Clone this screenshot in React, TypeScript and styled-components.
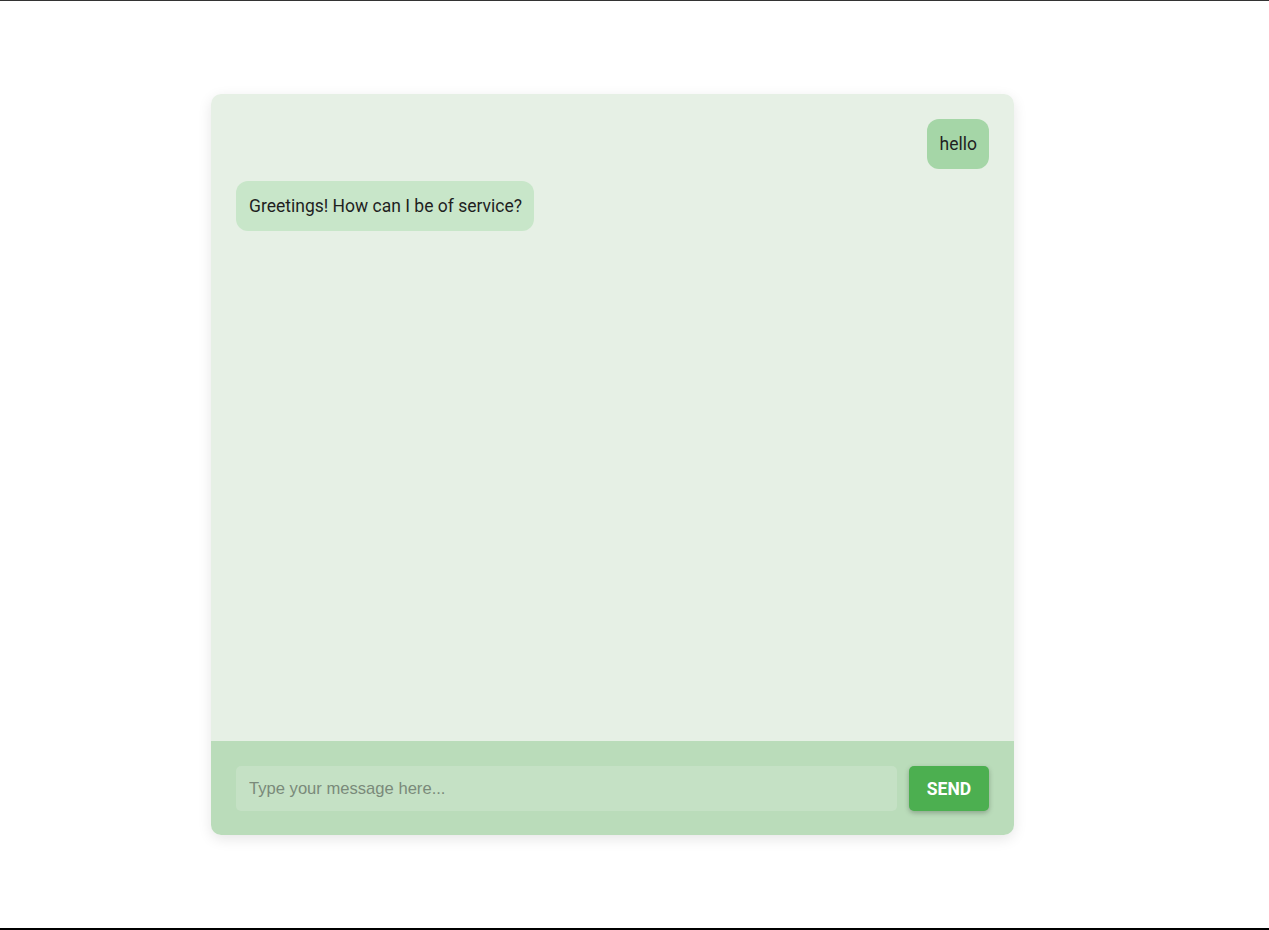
import React, { useState } from "react";
import styled, { createGlobalStyle } from "styled-components";

const Global = createGlobalStyle`
  html, body { margin: 0; padding: 0; background: #ffffff; }
  * { box-sizing: border-box; }
`;

const Page = styled.div`
  height: 930px;
  border-top: 1px solid #333333;
  border-bottom: 2px solid #000000;
  padding: 93px 0 0 211px;
  font-family: Roboto, "Liberation Sans", sans-serif;
`;

const Card = styled.div`
  width: 803px;
  height: 741px;
  border-radius: 10px;
  overflow: hidden;
  display: flex;
  flex-direction: column;
  box-shadow: 0 4px 14px rgba(0, 0, 0, 0.1);
`;

const Messages = styled.div`
  flex: 1;
  background: #e6f0e5;
  padding: 25px;
  display: flex;
  flex-direction: column;
  gap: 12px;
`;

const Bubble = styled.div<{ $user?: boolean }>`
  align-self: ${(p) => (p.$user ? "flex-end" : "flex-start")};
  background: ${(p) => (p.$user ? "#a5d6a7" : "#c8e6c9")};
  color: #1f1f1f;
  font-size: 17.5px;
  font-weight: 400;
  line-height: 25px;
  padding: 13px 12px 12px 13px;
  border-radius: 12px;
`;

const Footer = styled.div`
  height: 94px;
  background: #badcba;
  padding: 25px;
  display: flex;
  gap: 12px;
`;

const Input = styled.input`
  flex: 1;
  height: 45px;
  border: none;
  outline: none;
  border-radius: 5px;
  background: #c5e1c5;
  padding: 0 13px;
  font-family: "Liberation Sans", Arial, sans-serif;
  font-size: 16.6px;
  color: #333;
  &::placeholder { color: #7a8a7a; }
`;

const SendButton = styled.button`
  width: 80px;
  height: 45px;
  border: none;
  border-radius: 5px;
  background: #4caf50;
  color: #ffffff;
  font-family: Roboto, "Liberation Sans", sans-serif;
  font-weight: 700;
  font-size: 17.5px;
  text-transform: uppercase;
  box-shadow: 0 2px 5px rgba(0, 0, 0, 0.25);
  cursor: pointer;
`;

export default function App() {
  const [text, setText] = useState("");
  return (
    <>
      <Global />
      <Page>
        <Card>
          <Messages>
            <Bubble $user>hello</Bubble>
            <Bubble>Greetings! How can I be of service?</Bubble>
          </Messages>
          <Footer>
            <Input
              placeholder="Type your message here..."
              value={text}
              onChange={(e) => setText(e.target.value)}
            />
            <SendButton>Send</SendButton>
          </Footer>
        </Card>
      </Page>
    </>
  );
}
